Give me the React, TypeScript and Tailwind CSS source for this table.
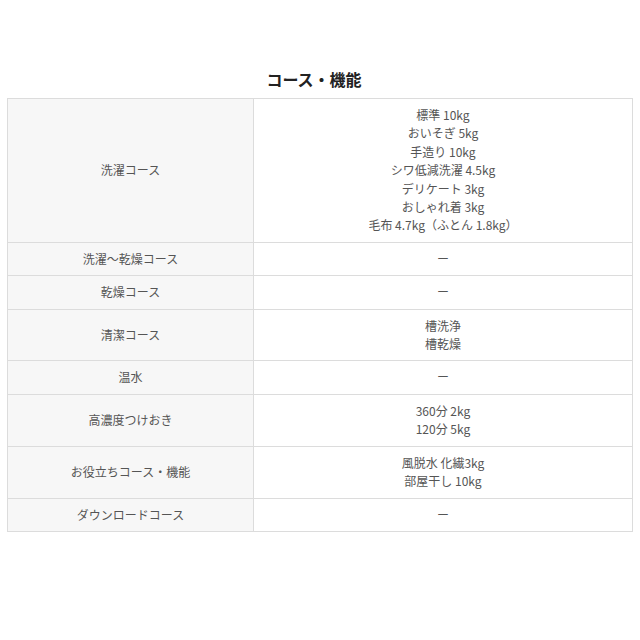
const rows: { label: string; values: string[] }[] = [
  {
    label: "洗濯コース",
    values: [
      "標準 10kg",
      "おいそぎ 5kg",
      "手造り 10kg",
      "シワ低減洗濯 4.5kg",
      "デリケート 3kg",
      "おしゃれ着 3kg",
      "毛布 4.7kg（ふとん 1.8kg）",
    ],
  },
  { label: "洗濯～乾燥コース", values: ["ー"] },
  { label: "乾燥コース", values: ["ー"] },
  { label: "清潔コース", values: ["槽洗浄", "槽乾燥"] },
  { label: "温水", values: ["ー"] },
  { label: "高濃度つけおき", values: ["360分 2kg", "120分 5kg"] },
  { label: "お役立ちコース・機能", values: ["風脱水 化繊3kg", "部屋干し 10kg"] },
  { label: "ダウンロードコース", values: ["ー"] },
];

export default function App() {
  return (
    <div
      className="w-[640px] h-[640px] bg-white px-[7px] pt-[67px]"
      style={{ fontFamily: '"Noto Sans CJK JP", "Noto Sans", sans-serif' }}
    >
      <h2 className="text-center text-[16px] leading-[24px] font-bold text-[#222] mb-[7px] pr-3">
        コース・機能
      </h2>
      <table className="w-full border-collapse border border-[#dcdcdc] text-[12px] leading-[18.4px] text-[#555]">
        <tbody>
          {rows.map((row) => (
            <tr key={row.label}>
              <th className="w-[246px] border border-[#dcdcdc] bg-[#f7f7f7] py-[7px] px-2 font-normal text-center align-middle">
                {row.label}
              </th>
              <td className="border border-[#dcdcdc] bg-white py-[7px] px-2 text-center align-middle">
                {row.values.map((v) => (
                  <div key={v}>{v}</div>
                ))}
              </td>
            </tr>
          ))}
        </tbody>
      </table>
    </div>
  );
}
